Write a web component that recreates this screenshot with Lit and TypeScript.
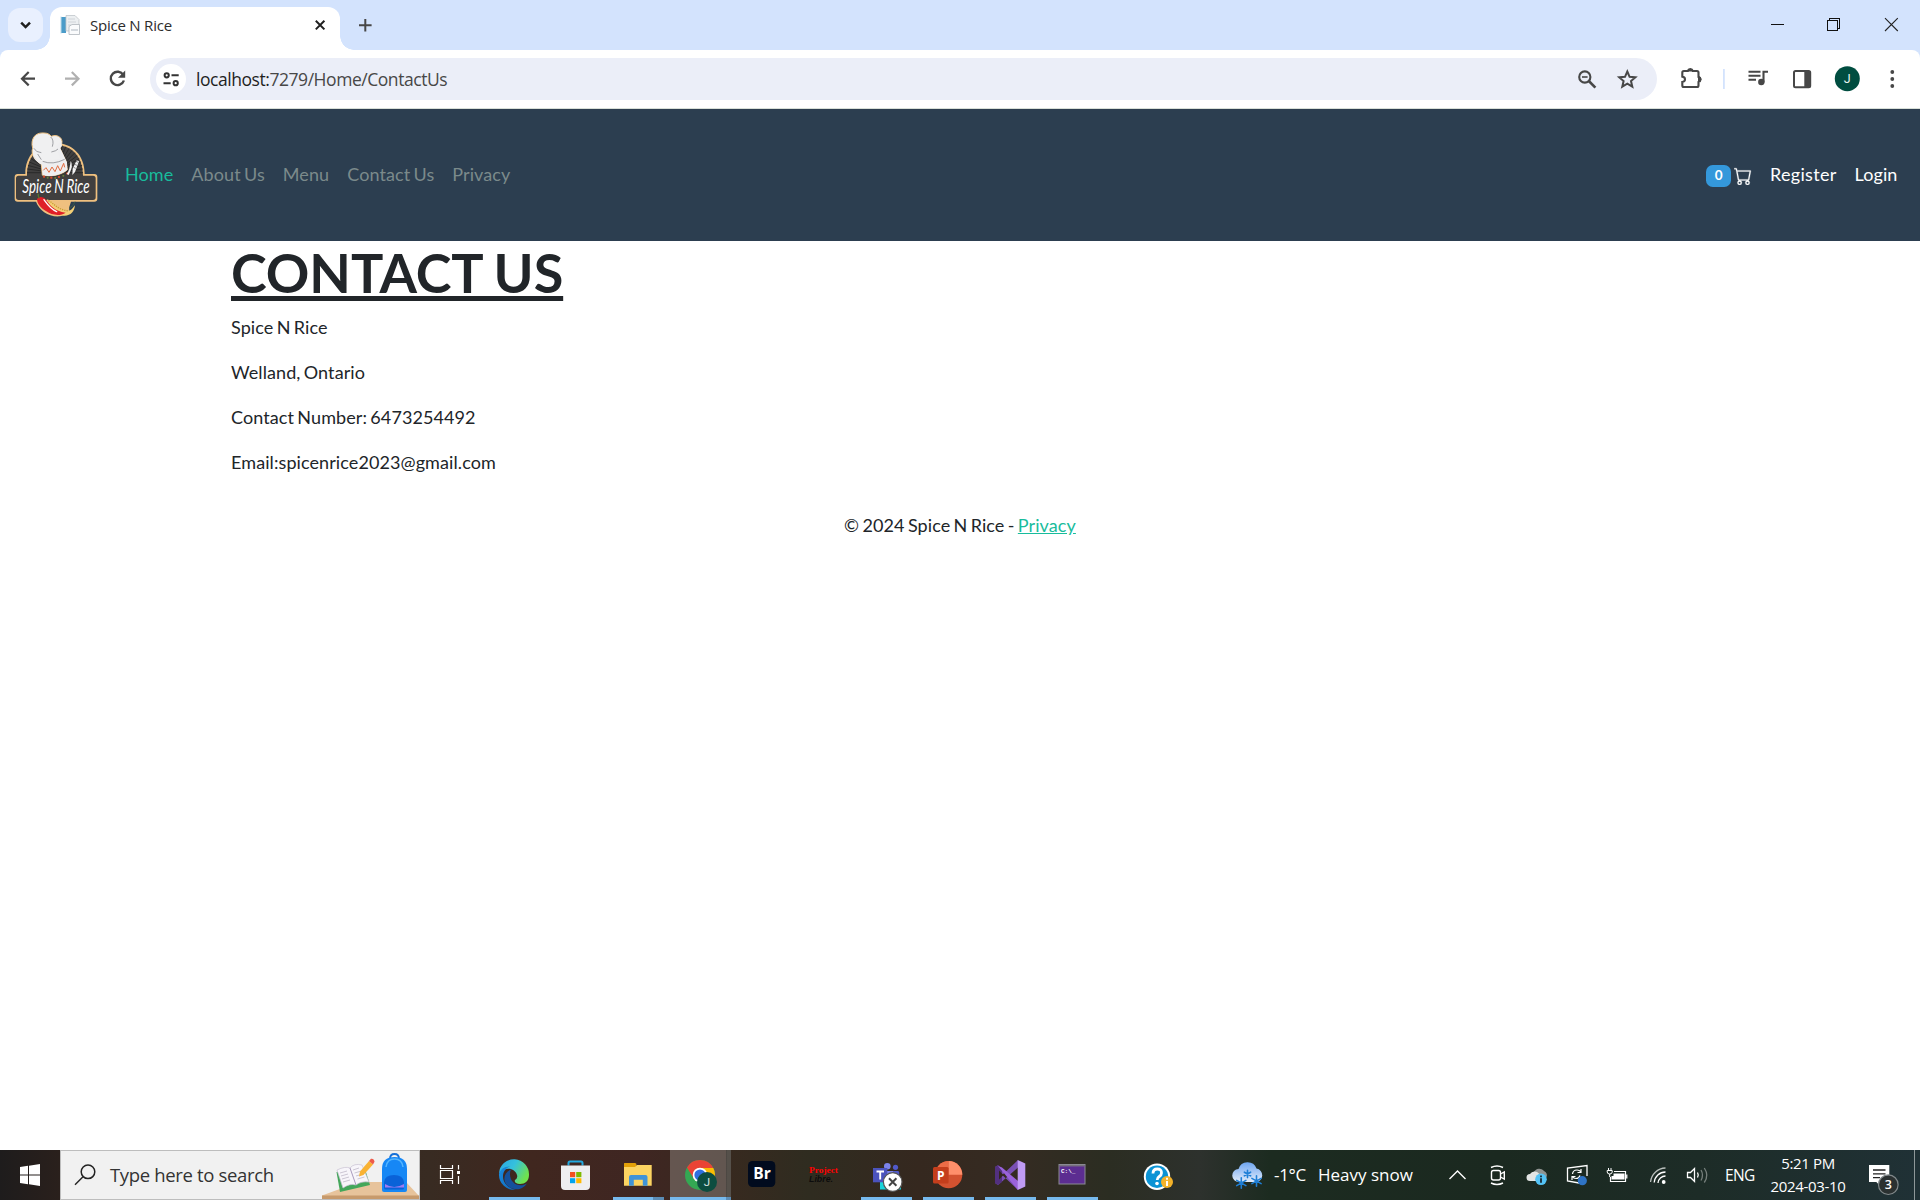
import { LitElement, html, svg, css } from "lit";
import type { SVGTemplateResult } from "lit";
import { customElement } from "lit/decorators.js";
import { classMap } from "lit/directives/class-map.js";

/** A piece of a bar, drawn in the bar's own coordinates from x to x + w. */
const slice = (x: number, y: number, w: number, h: number, body: SVGTemplateResult) =>
  html`<svg width=${w} height=${h} viewBox="${x} ${y} ${w} ${h}" aria-hidden="true">${body}</svg>`;

@customElement("browser-tabs")
class BrowserTabs extends LitElement {
  static styles = css`
    :host { display: block; background: #d3e3fd; height: 50px; }
    svg { display: block; flex: none; }
    .strip { display: flex; height: 50px; padding-left: 8px; }
    .search { width: 35px; height: 34px; margin-top: 8px; border-radius: 12px; background: #e9f0fe; }
    .tab { box-sizing: border-box; margin: 7px 0 0 7px; width: 290px; height: 43px; padding: 0 10px; background: #fff;
      border-radius: 12px 12px 0 0; display: flex; align-items: center; position: relative; }
    .tab::before, .tab::after { content: ""; position: absolute; bottom: 0; width: 14px; height: 14px; }
    .tab::before { right: 100%; background: radial-gradient(circle at 0 0, transparent 13.5px, #fff 14px); }
    .tab::after { left: 100%; background: radial-gradient(circle at 100% 0, transparent 13.5px, #fff 14px); }
    .title { font: 15px/20px "Open Sans", sans-serif; letter-spacing: -0.22px; color: #2c2c2c; margin-left: 10px; flex: 1; white-space: nowrap; padding-bottom: 7px; }
    .tab svg { margin-bottom: 7px; }
    .grow { flex: 1; }
  `;
  render() {
    return html`<div class="strip">
      <div class="search">${slice(8, 8, 35, 34, svg`<path d="M21.2 22.7l4.400 4.400 4.400-4.400" fill="none" stroke="#1f1f1f" stroke-width="2.500"/>`)}</div>
      <div class="tab">
        ${slice(60, 15, 20, 20, svg`
          <path d="M61 17h5v16h-5z" fill="#4b9cc9"/><path d="M60.5 16.5h1v17h-1z" fill="#bcd9ea"/>
          <path d="M66 15.5h9l4 4V31H66z" fill="#eceff1" stroke="#c0c5ca" stroke-width=".8"/>
          <path d="M68 19h7M68 22h8M68 25h3" stroke="#d0d4d9" stroke-width="1"/>
          <path d="M69 26.5l3-2h7.5v10H69z" fill="#fafbfc" stroke="#b0b6bd" stroke-width=".8"/>
          <path d="M71 30h7" stroke="#c3cad2" stroke-width="1.4"/>`)}
        <span class="title">Spice N Rice</span>
        ${slice(310, 15, 20, 20, svg`<path d="M315.8 20.8l8.6 8.6m0-8.6l-8.6 8.6" stroke="#1f1f1f" stroke-width="2"/>`)}
      </div>
      ${slice(340, 0, 50, 50, svg`<path d="M365.3 19v12.6M359 25.3h12.6" stroke="#474747" stroke-width="2"/>`)}
      <span class="grow"></span>
      ${slice(1748, 0, 172, 50, svg`<g fill="none" stroke="#111" shape-rendering="crispEdges">
        <path d="M1771 24.5h13"/><path d="M1827.5 20.5h10v10h-10zM1829.5 20v-1.5h10v10h-1.5"/></g>
        <path d="M1885 18.2l12.8 12.8m0-12.8L1885 31" stroke="#222" stroke-width="1.1"/>`)}
    </div>`;
  }
}

@customElement("browser-toolbar")
class BrowserToolbar extends LitElement {
  static styles = css`
    :host { display: block; background: #d3e3fd; }
    svg { display: block; flex: none; }
    .bar { box-sizing: border-box; height: 59px; display: flex; align-items: flex-start; background: #fff; border-radius: 8px 8px 0 0; border-bottom: 1px solid #d8dfd8; }
    .omni { margin-top: 8px; width: 1507px; height: 42px; border-radius: 21px; background: #ebeef8; display: flex; align-items: center; }
    .url { flex: 1; font: 17.5px/26px "Open Sans", sans-serif; letter-spacing: -0.45px; color: #474747; margin-left: 5px; white-space: nowrap; }
    .host { color: #1f1f1f; }
  `;
  render() {
    return html`<div class="bar">
      ${slice(0, 50, 150, 58, svg`
        <g fill="none" stroke-width="2.2"><path d="M35 78.7H22.5M28.7 72l-6.7 6.7 6.7 6.7" stroke="#474747"/>
        <path d="M65 78.7h12.5M71.8 72l6.7 6.7-6.7 6.7" stroke="#b0b0b0"/>
        <path d="M123.3 75a6.7 6.7 0 1 0 .6 5.5" stroke="#474747" stroke-width="2.4"/></g><path d="M125.2 70.6v7.2H118z" fill="#474747"/>`)}
      <div class="omni">
        ${slice(150, 58, 41, 42, svg`<circle cx="171" cy="79" r="15" fill="#fff"/>
          <g fill="none" stroke="#333" stroke-width="2"><circle cx="166.7" cy="75.3" r="2.1"/><path d="M171.5 75.3h7.2M163.5 83.2h7.2"/><circle cx="175.7" cy="83.2" r="2.1"/></g>`)}
        <span class="url"><span class="host">localhost:</span>7279/Home/ContactUs</span>
        ${slice(1570, 58, 87, 42, svg`<g fill="none" stroke="#474747"><circle cx="1584.8" cy="77" r="5.6" stroke-width="2.1"/><path d="M1588.8 81l6.6 6.6" stroke-width="2.6"/><path d="M1582 77h5.6" stroke-width="1.6"/>
          <path d="M1627.3 71.500l2.300 5.300 5.800.5-4.400 3.800 1.300 5.600-5-3-5 3 1.300-5.600-4.400-3.800 5.800-.5z" stroke-width="2"/></g>`)}
      </div>
      ${slice(1657, 50, 263, 58, svg`
        <path d="M1683.8 71h4a2.6 2.6 0 0 1 5 0h4.2q1.5 0 1.5 1.500v4.500a2.600 2.600 0 0 1 0 5v3.500q0 1.500-1.500 1.500h-13.200q-1.500 0-1.500-1.500v-3.500q2.700-.3 2.700-2.700t-2.700-2.700v-4.100q0-1.500 1.500-1.500z" fill="none" stroke="#474747" stroke-width="2.1"/>
        <path d="M1688 71a2.5 2.5 0 0 1 4.800 0zM1698.5 76.600a2.600 2.600 0 0 1 0 5.200z" fill="#474747" stroke="#474747"/>
        <path d="M1723 69h1.800v20h-1.800z" fill="#d3e3fd"/>
        <path d="M1748.5 71.800h12M1748.5 75.800h12M1748.5 79.800h7.500M1763.500 82.500V71.700h4.500" stroke="#474747" stroke-width="2.1" fill="none"/><circle cx="1761.3" cy="82" r="3.2" fill="#474747"/>
        <rect x="1794" y="71" width="16.2" height="16.2" rx="1.5" fill="none" stroke="#474747" stroke-width="2"/><path d="M1804.3 71h6v16.2h-6z" fill="#474747"/>
        <circle cx="1847.3" cy="78.7" r="12.5" fill="#004d40"/><text x="1847.3" y="83.2" text-anchor="middle" font-family="Roboto, sans-serif" font-size="12.5" fill="#e8f3f1">J</text>
        <g fill="#474747"><circle cx="1892.3" cy="72" r="1.9"/><circle cx="1892.3" cy="79" r="1.9"/><circle cx="1892.3" cy="86" r="1.9"/></g>`)}
    </div>`;
  }
}

@customElement("site-page")
class SitePage extends LitElement {
  static styles = css`
    :host { display: block; font: 18px/27px Lato, sans-serif; letter-spacing: 0.09px; word-spacing: -1.4px; color: #212529; }
    svg { display: block; flex: none; }
    .nav { box-sizing: border-box; height: 132px; background: #2c3e50; display: flex; align-items: center; padding: 0 13.5px 2px 5px; }
    .nav > svg { margin-top: -3px; }
    .links { display: flex; margin: 0 auto 0 11px; }
    .links span, .right .link { padding: 0 9px; }
    .links span { color: #7b8a8b; }
    .links .active { color: #18bc9c; }
    .right { display: flex; align-items: center; color: #fff; }
    .register { letter-spacing: 0.3px; }
    .badge { font-size: 13.5px; line-height: 13.5px; font-weight: 700; padding: 4.7px 8.8px; background: #3498db; border-radius: 6.75px; margin-top: 4px; }
    .cart { margin: 4px 8.6px 0 3px; }
    .main { width: 1458px; margin: 0 auto; }
    h1 { font-size: 54px; line-height: 64.8px; font-weight: 700; letter-spacing: -0.08px; margin: 0 0 8px; text-decoration: underline; text-decoration-thickness: 5px; text-underline-offset: 3px; }
    p { margin: 0 0 18px; }
    .foot { text-align: center; margin-top: 36px; }
    .foot a { color: #18bc9c; text-decoration: underline; }
  `;
  render() {
    return html`
      <div class="nav">
        ${this.logo()}
        <div class="links">
          ${["Home", "About Us", "Menu", "Contact Us", "Privacy"].map((t, i) => html`<span class=${classMap({ active: i === 0 })}>${t}</span>`)}
        </div>
        <div class="right">
          <span class="badge">0</span>
          <svg class="cart" width="18" height="18" viewBox="0 0 16 16" fill="#fff" stroke="#fff" stroke-width=".25"><path d="M0 1.5A.5.5 0 0 1 .5 1H2a.5.5 0 0 1 .485.379L2.89 3H14.5a.5.5 0 0 1 .491.592l-1.5 8A.5.5 0 0 1 13 12H4a.5.5 0 0 1-.491-.408L2.01 3.607 1.61 2H.5a.5.5 0 0 1-.5-.5zM3.102 4l1.313 7h8.17l1.313-7H3.102zM5 12a2 2 0 1 0 0 4 2 2 0 0 0 0-4zm7 0a2 2 0 1 0 0 4 2 2 0 0 0 0-4zm-7 1a1 1 0 1 1 0 2 1 1 0 0 1 0-2zm7 0a1 1 0 1 1 0 2 1 1 0 0 1 0-2z"/></svg>
          <span class="link register">Register</span><span class="link">Login</span>
        </div>
      </div>
      <div class="main">
        <h1>CONTACT US</h1>
        <p>Spice N Rice</p>
        <p>Welland, Ontario</p>
        <p>Contact Number: 6473254492</p>
        <p>Email:spicenrice2023@gmail.com</p>
      </div>
      <div class="foot">© 2024 Spice N Rice - <a>Privacy</a></div>`;
  }
  private logo() {
    const rays = Array.from({ length: 25 }, (_, i) => {
      const a = Math.PI * (1 + i / 24);
      return svg`<path d="M${150 + 30 * Math.cos(a)} ${158 + 30 * Math.sin(a)}L${150 + 84 * Math.cos(a)} ${158 + 84 * Math.sin(a)}"/>`;
    });
    return html`<svg width="100" height="105" viewBox="0 0 300 315">
      <path d="M61 162C61 105 98 69 150 69S239 105 239 162h29q9 0 9 9v65q0 9-9 9h-70l-5 15q3 25-28 29c-34 3-62-18-72-44H38q-9 0-9-9v-65q0-9 9-9z" fill="#efc07f"/>
      <path d="M66 167C66 109 100 75 150 75S234 109 234 167h30q8 0 8 8v57q0 8-8 8H41q-8 0-8-8v-57q0-8 8-8z" fill="#403f3f"/>
      <g stroke="#252525" stroke-width="2.5">${rays}</g>
      <path d="M81 74C80 48 97 37 117 39c11 0 17 4 22 10 15-7 31 2 32 15 0 10-5 15-8 17l20 43 4 25c-18 17-53 22-75 17l-3-33C88 120 77 100 83 85z" fill="#f0f0f1" stroke="#efc07f" stroke-width="3"/>
      <path d="M85 92C84 112 97 128 116 124l49-8-12-38 16-15 2 15-5 7 20 42 1 22c-18 17-53 22-74 17l-3-32C92 124 80 112 85 92z" fill="#eeeef0"/>
      <path d="M87 85q5 12 22 13M137 51q11 9 5 29M109 119l-11-17M113 124q30 12 66-6M139 96q15-3 20-9" fill="none" stroke="#74767b" stroke-width="2"/>
      <path d="M115 151l8-8 9 14 9-16 9 14 8-18 8 16 10-23 3 12" fill="none" stroke="#e36c40" stroke-width="3"/>
      <path d="M112 168q36 9 78-10" fill="none" stroke="#343434" stroke-width="2"/>
      <g fill="#d24b2d"><circle cx="117" cy="170" r="3.5"/><circle cx="139" cy="173" r="3.5"/><circle cx="162" cy="171" r="3.5"/><circle cx="187" cy="160" r="3.5"/></g>
      <g fill="#69843a"><circle cx="128" cy="173" r="3"/><circle cx="151" cy="174" r="3"/><circle cx="175" cy="167" r="3"/></g>
      <path d="M185 162q9-10 12-39 10 13-6 42zM203 146l12-25 7 3-12 32-8 9z" fill="#f3f3f4"/>
      <path d="M206 142l6 3M209 133l7 3M213 124l6 3" stroke="#57585b" stroke-width="2"/>
      <text x="52" y="137" transform="scale(1 1.6)" textLength="202" lengthAdjust="spacingAndGlyphs" font-family="Lato, sans-serif" font-style="italic" font-size="37" fill="#fff">Spice N Rice</text>
      <path d="M125 238c23 5 25 27 64 33 13 2 15-10 21-15-2 18-12 31-31 31-25 0-40-18-54-49z" fill="#f3cf76"/>
      <path d="M130 242c18 8 24 26 60 31" stroke="#c9973c" stroke-width="4" stroke-dasharray="4 3" fill="none"/>
      <path d="M96 238c3-9 19-10 27 1 12 17 26 34 59 39-16 11-42 8-58-4-17-10-27-22-28-36z" fill="#df1f27"/>
      <path d="M117 239c10 14 18 28 38 36" stroke="#fff" stroke-width="4" fill="none" stroke-linecap="round"/>
      <path d="M103 235q-5-8-3-14" stroke="#56752d" stroke-width="4" fill="none"/>
      <path d="M192 265q13-6 18-20" stroke="#3a5a46" stroke-width="3" fill="none"/>
    </svg>`;
  }
}

interface Task { x: number; state: "idle" | "open" | "stacked" | "active"; icon: SVGTemplateResult }

const flake = (x: number, y: number, r: number) => svg`<g stroke="#1f7fd6" stroke-width="1.6" stroke-linecap="round">
  <path d="M${x} ${y - r}v${2 * r}M${x - 0.87 * r} ${y - r / 2}l${1.74 * r} ${r}M${x - 0.87 * r} ${y + r / 2}l${1.74 * r} ${-r}"/></g>`;

const tasks: Task[] = [
  { x: 483, state: "open", icon: svg`
    <defs><linearGradient id="e1" x1="0" x2="1" y1="0" y2=".5"><stop offset="0" stop-color="#2aa5e2"/><stop offset=".5" stop-color="#35c1dd"/><stop offset="1" stop-color="#6fe24e"/></linearGradient>
    <linearGradient id="e2" x1="0" x2="1" y1="0" y2="1"><stop offset="0" stop-color="#1a8fe3"/><stop offset="1" stop-color="#0f63b5"/></linearGradient></defs>
    <path d="M499 23.5A15 15 0 0 1 529 25c0 6-4 9-9 9-4 0-6-2-5-4q3-2 2-5c-1-4-6-7-10-6-3 0-6 2-8 4.5z" fill="url(#e1)"/>
    <path d="M499 24c1-5 6-8 11-7.5-5 2-7 6-7 10 0 7 6 12 13 13.2A15 15 0 0 1 499 24z" fill="url(#e2)"/>
    <path d="M511 19.5c-5 2-8 7-6 12.5 3 7 12 9 17 6q3-1.5 5-4.5c-5 3-11 2-14-1.5-3-3-4-9-2-12.5z" fill="#14509c"/>` },
  { x: 545, state: "idle", icon: svg`
    <path d="M568.5 15.5v-2.5q0-1.5 1.5-1.5h11q1.5 0 1.5 1.5v2.5" fill="none" stroke="#22a9e0" stroke-width="2"/>
    <path d="M561 15.5h29V36q0 4-4 4h-21q-4 0-4-4z" fill="#eeeef0"/>
    <path d="M570 22h5.2v5.2H570z" fill="#f25022"/><path d="M576.2 22h5.2v5.2h-5.2z" fill="#7fba00"/><path d="M570 28.2h5.2v5H570z" fill="#00a4ef"/><path d="M576.2 28.2h5.2v5h-5.2z" fill="#ffb900"/>` },
  { x: 607, state: "stacked", icon: svg`
    <path d="M624 13.5q0-.5.5-.5H635q1.5 0 1.5 2v4H624z" fill="#e3a008"/><path d="M624 17h11l2-2h14.7v20.7H624z" fill="#fcd462"/>
    <path d="M629 35.7V27q0-2 2-2h14.5q2 0 2 2v8.7h-4.7v-6h-9v6z" fill="#3f93d8"/>` },
  { x: 669, state: "active", icon: svg`
    <circle cx="700" cy="25" r="15" fill="#34a853"/>
    <path d="M700 18h13.3A15 15 0 0 1 706 38.7z" fill="#fbbc04"/>
    <path d="M687 17.5L694 29l6-11h13.2A15 15 0 0 0 687 17.5z" fill="#ea4335"/>
    <circle cx="700" cy="25" r="7.3" fill="#fff"/><circle cx="700" cy="25" r="5.6" fill="#2f6fe0"/>
    <circle cx="707" cy="32" r="10" fill="#0d4d40"/><text x="707" y="36" text-anchor="middle" font-family="Roboto" font-size="11.5" fill="#d7e4e1">J</text>` },
  { x: 731, state: "idle", icon: svg`
    <rect x="748" y="11" width="27.3" height="26" rx="4.5" fill="#010b1e"/>
    <text x="753.3" y="29.3" font-family="Open Sans" font-weight="700" font-size="16" textLength="17.5" lengthAdjust="spacingAndGlyphs" fill="#fff">Br</text>` },
  { x: 793, state: "idle", icon: svg`
    <text x="809" y="23" textLength="29" lengthAdjust="spacingAndGlyphs" font-family="Liberation Serif" font-weight="700" font-size="8.5" fill="#f00">Project</text>
    <text x="809" y="31.5" textLength="24" lengthAdjust="spacingAndGlyphs" font-family="Liberation Sans" font-weight="700" font-style="italic" font-size="8.5" fill="#0c0c0c">Libre.</text>` },
  { x: 855, state: "open", icon: svg`
    <circle cx="887.3" cy="16.3" r="3.3" fill="#7b83eb"/><circle cx="895.5" cy="17.3" r="2.6" fill="#5059c9"/>
    <path d="M886 21h12q1.2 0 1.2 1.5v10H886z" fill="#5059c9"/><path d="M881 21h12v14h-12z" fill="#7b83eb"/>
    <path d="M880 31.5h21v8h-21z" fill="#19d3da"/><rect x="873" y="18" width="14.3" height="14.3" fill="#4b53bc"/>
    <path d="M876.5 21.5h7.5M880.2 21.5v8" stroke="#fff" stroke-width="1.9"/>
    <circle cx="892.7" cy="32" r="9.3" fill="#fff" stroke="#555" stroke-width="1.2"/><path d="M889 28.3l7.4 7.4m0-7.4l-7.4 7.4" stroke="#444" stroke-width="2"/>` },
  { x: 917, state: "open", icon: svg`
    <circle cx="948.7" cy="24.7" r="13.6" fill="#d35230"/><path d="M948.7 11.1a13.6 13.6 0 0 0-13.6 13.6h13.6z" fill="#ed6c47"/><path d="M948.7 11.1a13.6 13.6 0 0 1 13.6 13.6h-13.6z" fill="#ff8f6b"/>
    <rect x="933" y="17" width="15.6" height="16.4" rx="1.5" fill="#c43e1c"/><text x="940.8" y="29.5" text-anchor="middle" font-family="Open Sans" font-weight="700" font-size="12" fill="#fff">P</text>` },
  { x: 979, state: "open", icon: svg`
    <path d="M995 17l3-1.8 20 17.3v7.5L995 18zM995 33l3 2 20-17.5V10L995 32z" fill="#7a4fb5"/>
    <path d="M995 17l3-2 4 3v14l-4 3-3-2z" fill="#52307f"/><path d="M998 16l20 24 0-9-16-13.5z" fill="#9a62db"/>
    <path d="M999 20.500l4.500 4.500-4.500 4.500z" fill="#33261f"/>
    <path d="M1017.7 10l7.6 3.5v23l-7.6 3.5z" fill="#c09bf5"/>` },
  { x: 1041, state: "open", icon: svg`
    <rect x="1059" y="14.5" width="26" height="19.5" fill="#5c2d91" stroke="#8b8b93" stroke-width="1"/><path d="M1059.5 15.7h25" stroke="#77707f" stroke-width="1.5"/>
    <text x="1061" y="22.5" font-family="Liberation Mono" font-weight="700" font-size="6" fill="#fff">C:\\_</text>` },
];

@customElement("task-bar")
class TaskBar extends LitElement {
  static styles = css`
    :host { display: block; }
    svg { display: block; flex: none; }
    .bar { height: 50px; display: flex; color: #fff; font-family: "Open Sans", sans-serif; white-space: nowrap;
      background: linear-gradient(90deg, #1e1c1c 0, #2a201c 60px, #382b22 430px, #40271f 530px, #3f2622 640px, #38291f 720px, #2f2c20 810px, #35281f 920px, #352b22 1010px, #2b2d22 1110px, #2d312d 1200px, #1c2b20 1270px, #1b2920 1500px, #1d2c27 1700px, #203136 1920px); }
    .search { box-sizing: border-box; width: 360px; border: 1px solid #bdbdbd; background: #f1f1f1; display: flex; color: #333; font-size: 18.5px; line-height: 48px; }
    .search span { flex: 1; letter-spacing: -0.34px; }
    .task { width: 62px; height: 50px; }
    .task.active { background: linear-gradient(90deg, transparent 1px, #655650 1px, #625650 57px, #443f3b 57px, #55504a 58px); }
    .task.open svg { background: linear-gradient(#76b9ed, #76b9ed) 6px 47px / 51px 3px no-repeat; }
    .task.stacked svg { background: linear-gradient(90deg, #76b9ed 40px, #5b8cb5 40px) 6px 47px / 51px 3px no-repeat; }
    .task.active svg { background: linear-gradient(90deg, #76b9ed 56px, #5b8cb5 56px) 1px 47px / 61px 3px no-repeat; }
    .weather { width: 164px; font-size: 17px; line-height: 50px; letter-spacing: -0.3px; }
    .temp { display: inline-block; width: 44px; }
    .desc { letter-spacing: 0; }
    .lang { width: 37px; margin-left: -1px; font-size: 15.5px; line-height: 50px; letter-spacing: -0.7px; }
    .clock { width: 92px; text-align: center; font-size: 15px; line-height: 23px; padding-top: 2px; letter-spacing: -0.35px; }
  `;
  render() {
    return html`<div class="bar">
      ${slice(0, 0, 60, 50, svg`<path d="M20 17l8-1.2v8.7h-8zM29 15.7l11-1.6v10.4H29zM20 25.5h8v8.7l-8-1.2zM29 25.5h11v10.4l-11-1.6z" fill="#fff"/>`)}
      <div class="search">
        ${slice(61, 1, 49, 48, svg`<circle cx="88" cy="21.8" r="6.8" fill="none" stroke="#222" stroke-width="1.5"/><path d="M83 26.8l-8 8" stroke="#222" stroke-width="1.5"/>`)}
        <span>Type here to search</span>
        ${slice(320, 1, 99, 48, svg`
          <path d="M322 45.5L359 32h47l13 14v3h-97z" fill="#e7c39b"/><path d="M322 45.5h97V49h-97z" fill="#c79a6c"/>
          <path d="M336.500 22l3.500 20 30-7-5-16z" fill="#43a75a"/>
          <path d="M337 20q8-4 13-2 4-5 12-3l7 17q-8-1-13 3-6-2-13 3z" fill="#f7f5fa" stroke="#c9c2d3" stroke-width=".7"/><path d="M350 18l6 17" stroke="#a99bbd"/>
          <path d="M340 23l7-2m-6 5l7-2m-6 5l7-2m-6 5l7-2M353 20l6-2m-4.5 5l7-2m-5.5 5l7-2m-5.5 5l7-2" stroke="#c5bfce" stroke-width=".9"/>
          <path d="M360 21.5L369 11l4 3.5-9.5 10.5-4.5 1.5z" fill="#f9b233"/><path d="M369 11l2-2.3q3-.5 3.5 3L373 14.5z" fill="#ee5a4a"/>
          <path d="M390 9q0-5 4.5-5t4.500 5" stroke="#1670d8" stroke-width="1.8" fill="none"/>
          <path d="M382 40V19q0-12 12.5-12T407 19v21q0 2-2 2h-21q-2 0-2-2z" fill="#1687f5"/><path d="M386 17q1-8 8.5-8t8.500 8" fill="none" stroke="#54b5ff" stroke-width="1.5"/>
          <path d="M384 38v-6q1-7 10-7t10 7v6q0 1.500-1.500 1.500h-17q-1.500 0-1.500-1.500z" fill="#0a62d8"/><path d="M385 34q9 6 19 0v3.500h-19z" fill="#9d7bf2"/>`)}
      </div>
      ${slice(420, 0, 63, 50, svg`<g fill="none" stroke="#fff" stroke-width="1.2"><path d="M440.5 15v3.5h12V15M440.5 34v-3.5h12V34M440.5 20.5h12v8h-12zM458.5 15v4.5M458.5 26v8"/></g><path d="M457 21h3v3h-3z" fill="#fff"/>`)}
      ${tasks.map(t => html`<div class="task ${t.state}">${slice(t.x, 0, 62, 50, t.icon)}</div>`)}
      ${slice(1103, 0, 171, 50, svg`
        <circle cx="1157" cy="26.7" r="13.2" fill="#fff"/><circle cx="1157" cy="26.7" r="11.2" fill="#0b93d5"/>
        <path d="M1153 23.5q0-4.5 4.300-4.500t4.200 4q0 2-2.200 3.500t-2.100 3.500" fill="none" stroke="#fff" stroke-width="2.8"/><circle cx="1157" cy="33.5" r="1.8" fill="#fff"/>
        <circle cx="1167" cy="32" r="6" fill="#f3b229"/><path d="M1167 31v5M1167 27.7v2" stroke="#fff" stroke-width="1.9"/>
        <defs><linearGradient id="cl" x1="0" x2="0" y1="0" y2="1"><stop offset="0" stop-color="#6ea5f0"/><stop offset="1" stop-color="#e2ecfb"/></linearGradient></defs>
        <path d="M1239 32a6.500 6.500 0 0 1-.5-13 9.500 9.500 0 0 1 18-.5A6.800 6.800 0 0 1 1256 32z" fill="url(#cl)"/>
        ${flake(1247.5, 24, 3.6)}${flake(1241.3, 33, 5.3)}${flake(1256.5, 31, 5.3)}`)}
      <div class="weather"><span class="temp">-1°C</span><span class="desc">Heavy snow</span></div>
      ${slice(1438, 0, 288, 50, svg`<g fill="none" stroke="#fff" stroke-width="1.4">
        <path d="M1449.5 29l8-8 8 8"/>
        <rect x="1491.5" y="20.5" width="9" height="9.5" rx="2"/><path d="M1500.5 24l3.800-2v7l-3.800-2M1491 17.500q6-3 12 0M1491 33q6 3 12 0"/></g>
        <path d="M1534 28a4.500 4.500 0 0 1 0-6 6 6 0 0 1 10-1 4.500 4.500 0 0 1 2 7z" fill="#8f9391"/><path d="M1530 31a3.500 3.500 0 0 1 0-7 5.500 5.500 0 0 1 9-.5l4 3-2 4.500z" fill="#e3e5e4"/>
        <circle cx="1541" cy="29.3" r="5.8" fill="#54c3f5"/><path d="M1541 28.3v4.500M1541 25.500v1.700" stroke="#152028" stroke-width="1.7"/>
        <g fill="none" stroke="#fff" stroke-width="1.3"><path d="M1579 33l-11.500-2V18l19.500-2.500V26"/>
        <path d="M1572.5 24q.5-4 4.500-4 2.500 0 4 2M1581 19v3.500h-3.500M1580 25.500q-1 3-4 3-2.500 0-3.500-2M1572 30v-3.500h3.500" stroke-width="1.2"/></g>
        <circle cx="1582.3" cy="30.7" r="4.6" fill="#2f74c6"/>
        <path d="M1613.500 23.500h11v6h-13v-3.500h2z" fill="#fff"/><path d="M1614 21.500h11.500v10h-15V27M1626.800 24.500v4" fill="none" stroke="#fff" stroke-width="1.2"/>
        <path d="M1608.500 18v3M1611 18v3M1609.700 24v3" stroke="#fff" stroke-width="1"/><path d="M1607.2 20.500h5v1.500q0 2-2.500 2t-2.500-2z" fill="none" stroke="#fff"/>
        <g fill="none" stroke="#fff" stroke-width="1.3"><path d="M1650.5 32A15.500 15.500 0 0 1 1665.500 18" stroke="#b9bfbc"/><path d="M1654.2 32.500a11.500 11.500 0 0 1 11.300-10.500M1658 33a7.700 7.700 0 0 1 7.500-7"/></g><circle cx="1663.7" cy="32" r="1.9" fill="#fff"/>
        <g fill="none" stroke="#fff" stroke-width="1.3"><path d="M1687.5 22.500h3l4-4v13l-4-4h-3zM1697.500 22.500q1.500 2.500 0 5"/><path d="M1701 20q3 5 0 10.500M1704.300 18q5 7.500 0 14.500" stroke="#77807c"/></g>`)}
      <div class="lang">ENG</div>
      <div class="clock"><div>5:21 PM</div><div>2024-03-10</div></div>
      ${slice(1854, 0, 66, 50, svg`<path d="M1869 15h20.3v17h-9v4l-4-4H1869z" fill="#fff"/><path d="M1873 20h12.500M1873 23.800h12.500M1873 27.600h7" stroke="#222" stroke-width="1.3"/>
        <circle cx="1888.3" cy="34.7" r="9.8" fill="#2b3131" stroke="#81888a" stroke-width="1.2"/><text x="1888.3" y="39.200" text-anchor="middle" font-family="Open Sans" font-weight="600" font-size="12.5" fill="#fff">3</text>
        <path d="M1914.5 0v50" stroke="#8e9799" stroke-width="1"/>`)}
    </div>`;
  }
}

@customElement("app-root")
class AppRoot extends LitElement {
  static styles = css`
    :host { display: flex; flex-direction: column; width: 1920px; height: 1200px; background: #fff; overflow: hidden; }
    .page { flex: 1; }
  `;
  render() {
    return html`<browser-tabs></browser-tabs><browser-toolbar></browser-toolbar><site-page class="page"></site-page><task-bar></task-bar>`;
  }
}
